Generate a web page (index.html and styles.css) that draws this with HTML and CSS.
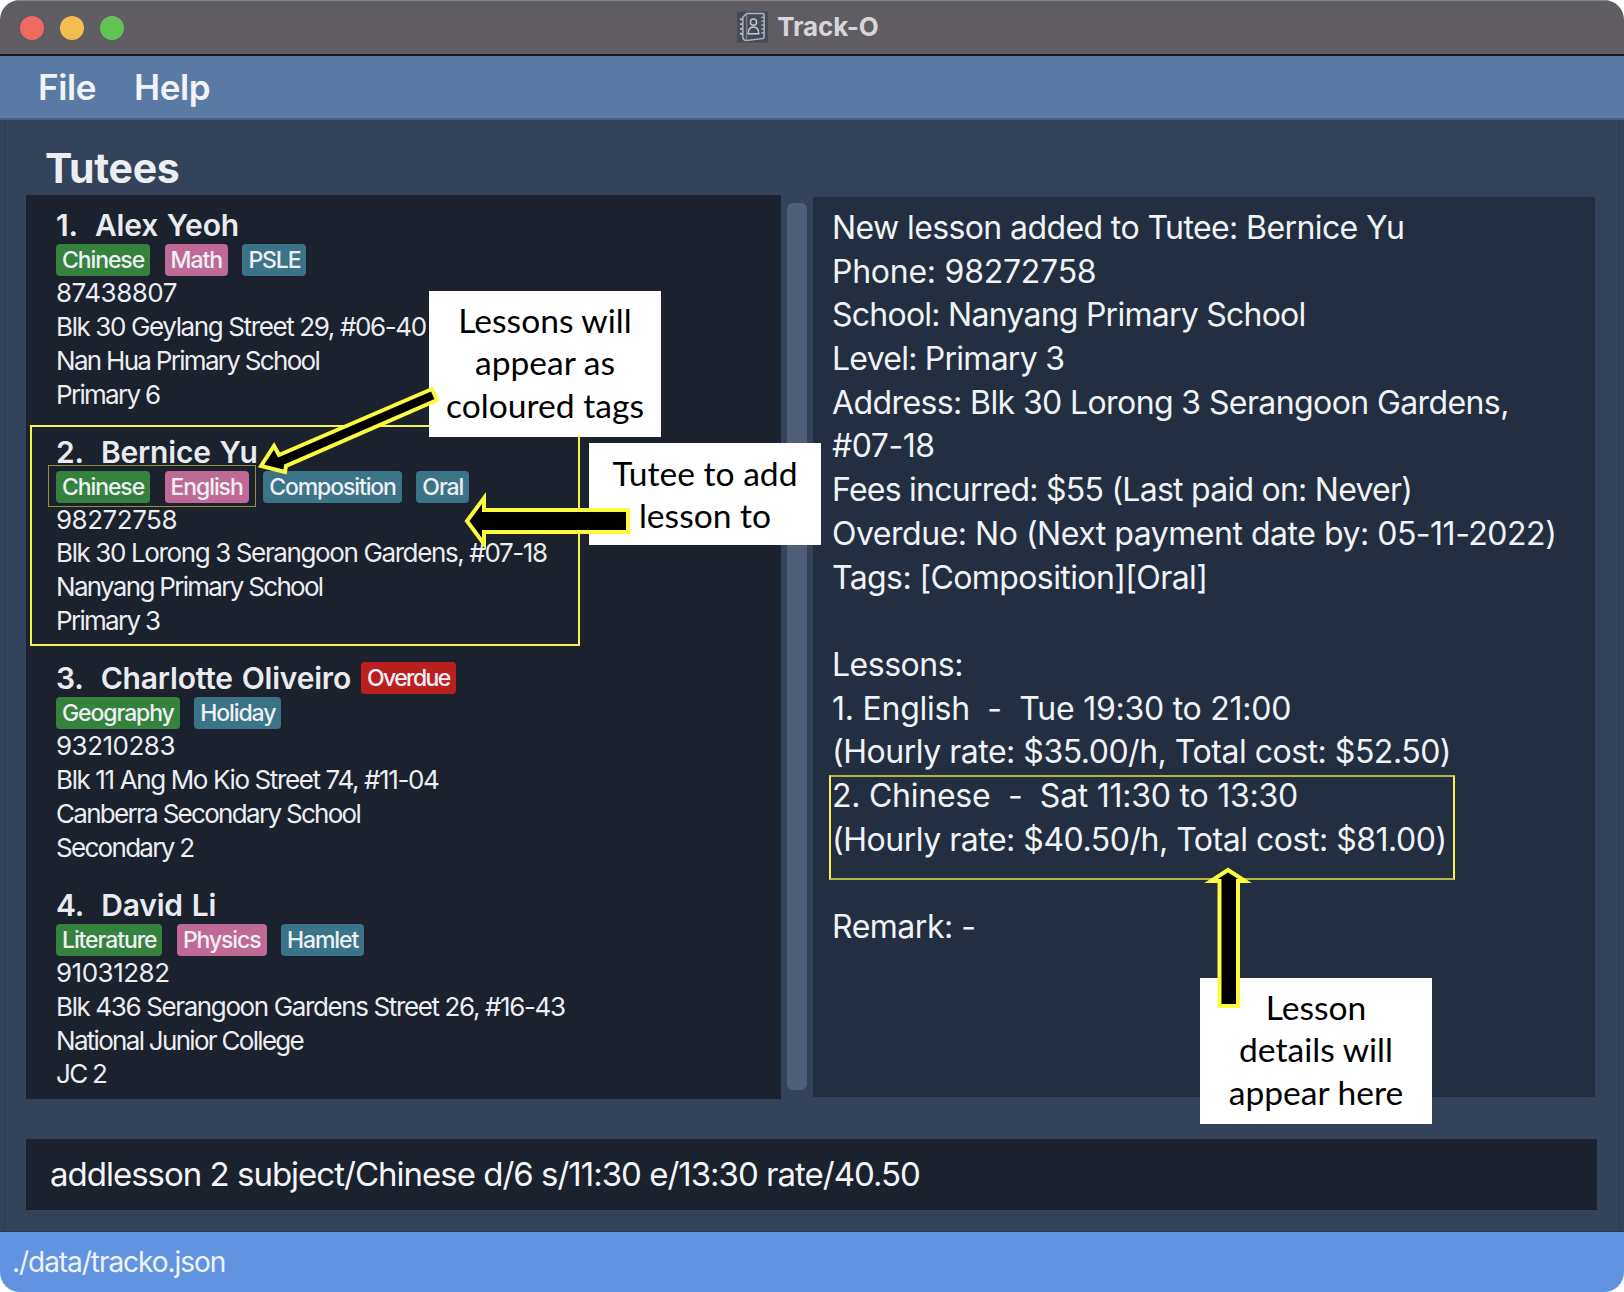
FILE: index.html
```html
<!DOCTYPE html>
<html lang="en">
<head>
<meta charset="utf-8">
<title>Track-O</title>
<link rel="stylesheet" href="styles.css">
</head>
<body>
<div class="app">
  <header class="titlebar">
    <div class="lights">
      <span class="light red"></span>
      <span class="light amber"></span>
      <span class="light green"></span>
    </div>
    <div class="wintitle">
      <svg class="appicon" viewBox="0 0 32 32" aria-hidden="true">
        <rect width="32" height="32" fill="#444a57"/>
        <path d="M6 6 L10 2 H26 Q28 2 28 4 V26 Q28 28 26 28 L10 30 Q7 30 6 27 Z" fill="none" stroke="#b4b5ba" stroke-width="1.5"/>
        <path d="M10 2 V30" fill="none" stroke="#8d8f96" stroke-width="1"/>
        <path d="M6 8 H3 M6 13 H3 M6 18 H3 M6 23 H3" stroke="#b4b5ba" stroke-width="2"/>
        <path d="M25 6 H28 M25 10 H28 M25 14 H28 M25 18 H28 M25 22 H28" stroke="#b4b5ba" stroke-width="1.2"/>
        <circle cx="17" cy="11" r="3.2" fill="none" stroke="#c8c9cd" stroke-width="1.5"/>
        <path d="M11.5 23 Q11.5 16 17 16 Q22.500 16 22.500 23 Z" fill="none" stroke="#c8c9cd" stroke-width="1.5"/>
      </svg>
      <span class="wintitle-text">Track-O</span>
    </div>
  </header>
  <nav class="menubar">
    <span class="menu-item">File</span>
    <span class="menu-item">Help</span>
  </nav>
  <main class="main">
    <div class="pane">
      <h1 class="pane-title">Tutees</h1>
      <div class="columns">
        <section class="list">
          <article class="card">
            <div class="name">1.  Alex Yeoh</div>
            <div class="tags"><span class="tag subj">Chinese</span><span class="tag lvl">Math</span><span class="tag other">PSLE</span></div>
            <div class="row phone">87438807</div>
            <div class="row addr">Blk 30 Geylang Street 29, #06-40</div>
            <div class="row">Nan Hua Primary School</div>
            <div class="row">Primary 6</div>
          </article>
          <article class="card">
            <div class="name">2.  Bernice Yu</div>
            <div class="tags"><span class="tag subj">Chinese</span><span class="tag lvl">English</span><span class="tag other">Composition</span><span class="tag other">Oral</span></div>
            <div class="row phone">98272758</div>
            <div class="row addr">Blk 30 Lorong 3 Serangoon Gardens, #07-18</div>
            <div class="row">Nanyang Primary School</div>
            <div class="row">Primary 3</div>
          </article>
          <article class="card">
            <div class="name">3.  Charlotte Oliveiro<span class="tag overdue">Overdue</span></div>
            <div class="tags"><span class="tag subj">Geography</span><span class="tag other">Holiday</span></div>
            <div class="row phone">93210283</div>
            <div class="row addr">Blk 11 Ang Mo Kio Street 74, #11-04</div>
            <div class="row">Canberra Secondary School</div>
            <div class="row">Secondary 2</div>
          </article>
          <article class="card">
            <div class="name">4.  David Li</div>
            <div class="tags"><span class="tag subj">Literature</span><span class="tag lvl">Physics</span><span class="tag other">Hamlet</span></div>
            <div class="row phone">91031282</div>
            <div class="row addr">Blk 436 Serangoon Gardens Street 26, #16-43</div>
            <div class="row">National Junior College</div>
            <div class="row">JC 2</div>
          </article>
        </section>
        <div class="scrollbar"></div>
        <section class="detail">
          <div class="line snug">New lesson added to Tutee: Bernice Yu</div>
          <div class="line loose">Phone: 98272758</div>
          <div class="line tight">School: Nanyang Primary School</div>
          <div class="line tight">Level: Primary 3</div>
          <div class="line snug">Address: Blk 30 Lorong 3 Serangoon Gardens,</div>
          <div class="line">#07-18</div>
          <div class="line tight">Fees incurred: $55 (Last paid on: Never)</div>
          <div class="line">Overdue: No (Next payment date by: 05-11-2022)</div>
          <div class="line snug">Tags: [Composition][Oral]</div>
          <div class="line">&nbsp;</div>
          <div class="line">Lessons:</div>
          <div class="line loose">1. English  -  Tue 19:30 to 21:00</div>
          <div class="line">(Hourly rate: $35.00/h, Total cost: $52.50)</div>
          <div class="line loose">2. Chinese  -  Sat 11:30 to 13:30</div>
          <div class="line">(Hourly rate: $40.50/h, Total cost: $81.00)</div>
          <div class="line">&nbsp;</div>
          <div class="line">Remark: -</div>
        </section>
      </div>
      <div class="command">addlesson 2 subject/Chinese d/6 s/11:30 e/13:30 rate/40.50</div>
    </div>
  </main>
  <footer class="status">./data/tracko.json</footer>

  <div class="mark mark-tutee"></div>
  <div class="mark-thin mark-tags"></div>
  <div class="mark mark-lesson"></div>
  <div class="callout callout-tags">Lessons will<br>appear as<br>coloured tags</div>
  <div class="callout callout-tutee">Tutee to add<br>lesson to</div>
  <div class="callout callout-details">Lesson<br>details will<br>appear here</div>
  <svg class="arrows" viewBox="0 0 1624 1292" aria-hidden="true">
    <polygon class="arrow" points="261,466 274,446 279,455 432,389 437,400 286,466 285,472"/>
    <polygon class="arrow" points="467,521 484,498 484,510 628,510 628,532 484,532 484,544"/>
    <polygon class="arrow" points="1228,870 1211,881 1219.500,881 1219.500,1006 1238,1006 1238,881 1245,881"/>
  </svg>
</div>
</body>
</html>
```

FILE: styles.css
```css
* { box-sizing: border-box; }
html, body { margin: 0; padding: 0; background: #fff; }
body { font-family: "Inter", "Liberation Sans", sans-serif; }

.app {
  position: relative;
  width: 1624px;
  height: 1292px;
  display: flex;
  flex-direction: column;
  border-radius: 20px;
  overflow: hidden;
  color: #eef0f4;
}

.titlebar {
  position: relative;
  height: 56px;
  flex: none;
  display: flex;
  align-items: center;
  justify-content: center;
  background: #605d62;
  border-top: 1px solid #85838a;
  border-bottom: 2px solid #1a1a1c;
}
.lights {
  position: absolute;
  left: 20px;
  top: 15px;
  display: flex;
  gap: 16px;
}
.light { width: 24px; height: 24px; border-radius: 50%; }
.red { background: #ee6a5f; }
.amber { background: #f5bd4f; }
.green { background: #61c454; }
.wintitle {
  display: flex;
  align-items: center;
  gap: 9px;
  margin: -2px 8px 0 0;
}
.appicon { width: 31px; height: 32px; }
.wintitle-text {
  font-size: 26px;
  font-weight: 700;
  color: #d6d6da;
  letter-spacing: -0.1px;
}

.menubar {
  height: 64px;
  flex: none;
  display: flex;
  align-items: center;
  gap: 38px;
  padding-left: 38px;
  background: #5a7aa6;
  border-bottom: 2px solid #456088;
}
.menu-item {
  font-size: 35px;
  font-weight: 600;
  color: #f2f3f7;
  letter-spacing: -0.4px;
}

.main {
  flex: 1;
  min-height: 0;
  padding: 0 4px;
  background: #344359;
}
.pane {
  height: 100%;
  display: flex;
  flex-direction: column;
  padding: 29px 22px 21px 21px;
  border-left: 1px solid #2a394e;
  border-right: 1px solid #2a394e;
}
.pane-title {
  margin: 0 0 6px 19px;
  height: 40px;
  font-size: 41px;
  line-height: 38px;
  font-weight: 700;
  color: #eceef2;
  letter-spacing: -0.3px;
}
.columns {
  flex: 1;
  min-height: 0;
  display: flex;
}

.list {
  width: 755px;
  flex: none;
  overflow: hidden;
  background: #1b212d;
}
.card {
  height: 226.6px;
  padding: 12px 0 0 30px;
}
.name {
  height: 36px;
  display: flex;
  align-items: center;
  white-space: pre;
  font-size: 30px;
  line-height: 36px;
  font-weight: 600;
  color: #e9ebef;
  letter-spacing: -0.2px;
  word-spacing: 1.5px;
  margin-bottom: 1px;
}
.tags { display: flex; gap: 14.5px; height: 32px; }
.tag {
  height: 32px;
  padding: 0 6px;
  display: inline-flex;
  align-items: center;
  border-radius: 4px;
  font-size: 23px;
  font-weight: 500;
  letter-spacing: -1.1px;
  color: #eef0f4;
}
.subj { background: #35823e; }
.lvl { background: #bf6a96; }
.other { background: #3b7389; }
.overdue { background: #bb2020; margin-left: 10px; letter-spacing: -1.6px; }
.row {
  height: 33.9px;
  font-size: 26px;
  line-height: 33.9px;
  white-space: nowrap;
  letter-spacing: -1.7px;
  color: #eceef2;
}
.phone { letter-spacing: -0.5px; }
.addr { letter-spacing: -1.38px; }

.scrollbar {
  width: 20px;
  flex: none;
  margin: 8px 6px 9px 6px;
  border-radius: 6px;
  background: #4f5f77;
}

.detail {
  flex: 1;
  margin: 2px 2px 2px 0;
  padding: 9px 0 0 19px;
  background: #232f40;
}
.line {
  height: 43.7px;
  font-size: 32px;
  line-height: 43.7px;
  white-space: pre;
  letter-spacing: -0.48px;
  color: #f1f3f6;
}
.line.snug { letter-spacing: -0.6px; }
.line.tight { letter-spacing: -0.75px; }
.line.loose { letter-spacing: -0.25px; }

.command {
  flex: none;
  height: 71px;
  margin-top: 40px;
  padding: 0 0 2px 24px;
  display: flex;
  align-items: center;
  font-size: 33px;
  letter-spacing: -1px;
  color: #f4f5f8;
  background: #1b212d;
}

.status {
  flex: none;
  height: 61px;
  padding-left: 12px;
  display: flex;
  align-items: center;
  font-size: 28px;
  letter-spacing: -1.05px;
  color: #eef3fb;
  background: #6293e0;
  border-top: 1px solid #2a394e;
}

.mark { position: absolute; border: 2px solid #f4f44e; }
.mark-tutee { left: 30px; top: 425px; width: 550px; height: 221px; }
.mark-lesson { left: 829px; top: 775px; width: 626px; height: 105px; border-color: #b5b547; border-left-color: #f4f44e; border-right-color: #f4f44e; }
.mark-thin { position: absolute; border: 1px solid #8f8f3c; }
.mark-tags { left: 48px; top: 465px; width: 208px; height: 42px; }

.callout {
  position: absolute;
  display: flex;
  align-items: center;
  justify-content: center;
  text-align: center;
  padding-bottom: 3px;
  background: #fff;
  color: #000;
  font-family: "Lato", "Open Sans", sans-serif;
  font-size: 33.6px;
  line-height: 42.5px;
}
.callout-tags { left: 429px; top: 291px; width: 232px; height: 146px; }
.callout-tutee { left: 589px; top: 443px; width: 232px; height: 102px; padding-bottom: 0; }
.callout-details { left: 1200px; top: 978px; width: 232px; height: 146px; }

.arrows {
  position: absolute;
  left: 0;
  top: 0;
  width: 1624px;
  height: 1292px;
  pointer-events: none;
}
.arrow {
  fill: #000;
  stroke: #fbfb3f;
  stroke-width: 4;
  stroke-linejoin: miter;
}
```
